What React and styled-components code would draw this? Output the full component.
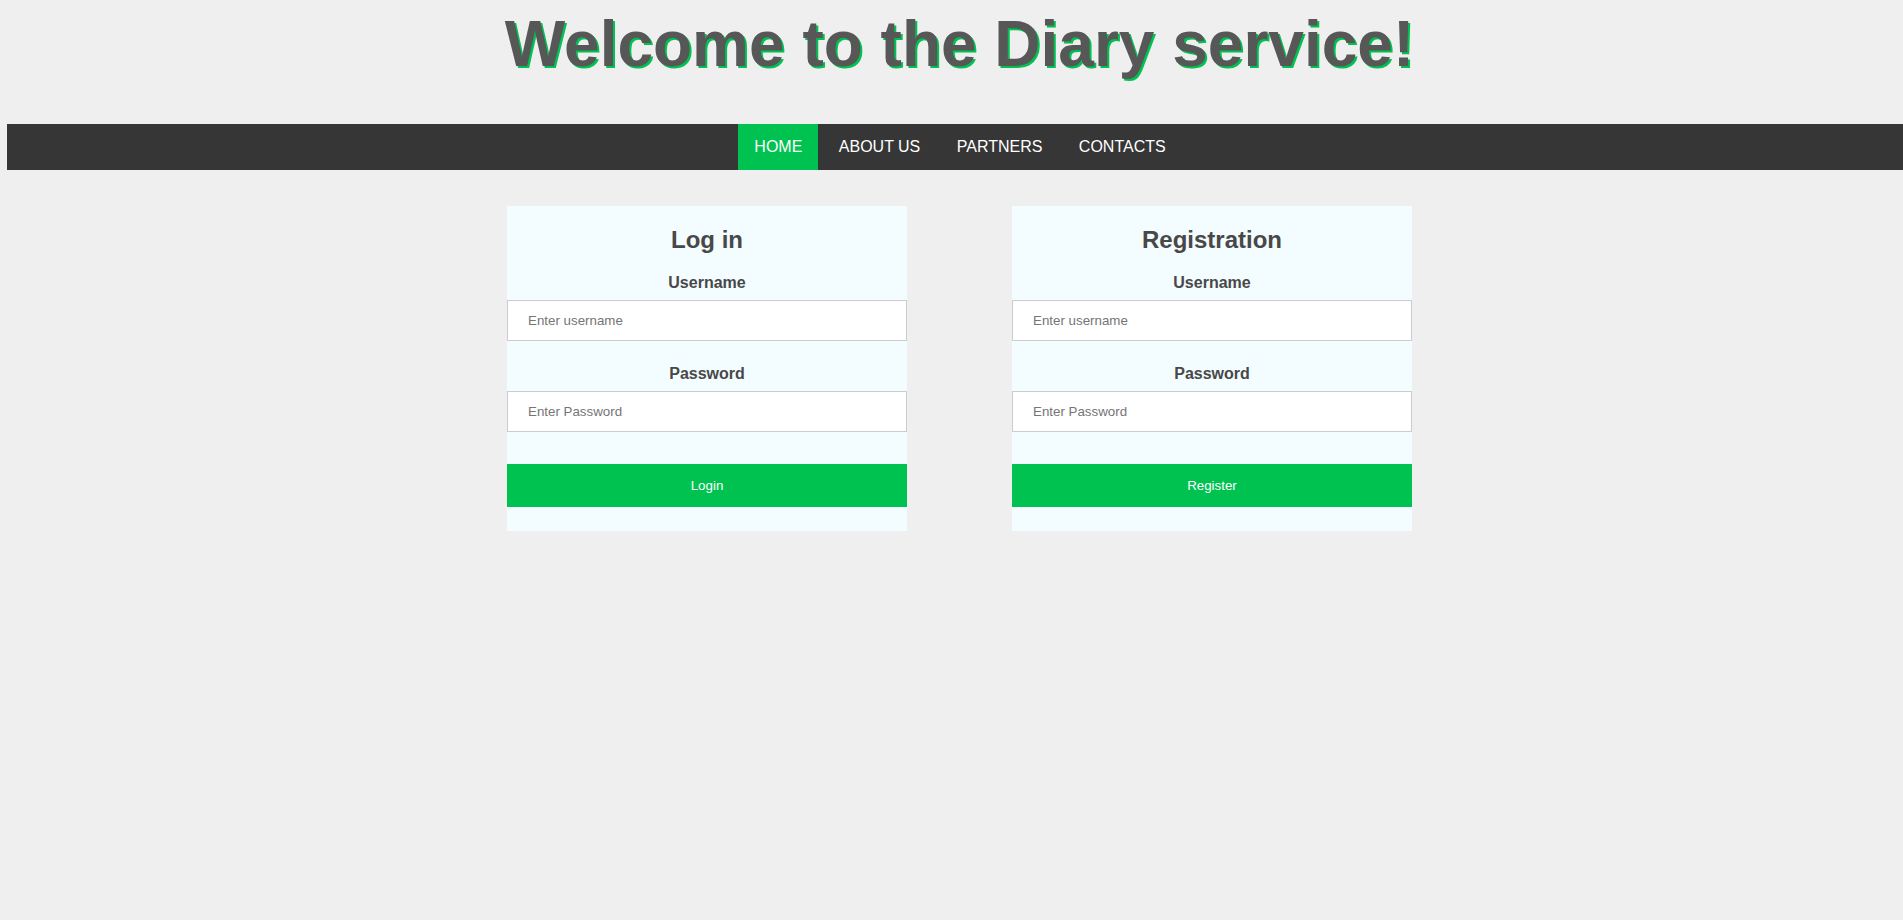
import React, { Fragment, useId } from "react";
import styled, { createGlobalStyle } from "styled-components";

const GlobalStyle = createGlobalStyle`
  *, *::before, *::after { box-sizing: border-box; }
  body {
    margin: 0;
    background: #efefef;
    color: #484848;
    font-family: "Liberation Sans", Arial, sans-serif;
    font-size: 16px;
    line-height: 18px;
  }
`;

const Page = styled.div`
  padding: 8px 0 24px 8px;
`;

const Header = styled.header`
  padding-left: 8px;
  margin-bottom: 44px;
`;

const Title = styled.h1`
  margin: 0;
  color: #575757;
  font-size: 64px;
  line-height: 72px;
  text-align: center;
  text-shadow: 2px 2px 0 #00c250;
`;

const NavBar = styled.nav`
  margin-left: -1px;
  padding-left: 10px;
  background: #363636;
`;

const NavList = styled.ul`
  margin: 0;
  padding: 0;
  list-style: none;
  text-align: center;
`;

const NavItem = styled.li`
  display: inline-block;
  vertical-align: top;
`;

const NavLink = styled.a`
  display: block;
  padding: 14px 16px;
  background: ${({ $active }) => ($active ? "#00c250" : "transparent")};
  color: #fff;
  text-decoration: none;
`;

const Main = styled.main`
  display: flex;
  flex-wrap: wrap;
  justify-content: center;
  gap: 36px 105px;
  padding: 36px 0 0 8px;
`;

const Card = styled.form`
  display: flex;
  flex-direction: column;
  width: 400px;
  max-width: 100%;
  padding: 20px 0 24px;
  background: #f3fcff;
  text-align: center;
`;

const CardTitle = styled.h2`
  margin: 0 0 20px;
  font-size: 24px;
  line-height: 28px;
`;

const Fields = styled.div`
  display: flex;
  flex-direction: column;
  gap: 24px;
  margin-bottom: 32px;
`;

const Field = styled.div`
  display: flex;
  flex-direction: column;
  gap: 8px;
`;

const Label = styled.label`
  font-weight: bold;
`;

const Input = styled.input`
  width: 100%;
  padding: 12px 20px;
  border: 1px solid #ccc;
  border-radius: 0;
  background: #fff;
`;

const SubmitButton = styled.button`
  width: 100%;
  padding: 14px 20px;
  border: 0;
  background: #00c250;
  color: #fff;
  cursor: pointer;
`;

const links = ["HOME", "ABOUT US", "PARTNERS", "CONTACTS"];

function AccountForm({ title, action }) {
  const id = useId();
  return (
    <Card onSubmit={(e) => e.preventDefault()}>
      <CardTitle>{title}</CardTitle>
      <Fields>
        <Field>
          <Label htmlFor={`${id}-name`}>Username</Label>
          <Input id={`${id}-name`} type="text" placeholder="Enter username" required />
        </Field>
        <Field>
          <Label htmlFor={`${id}-pass`}>Password</Label>
          <Input id={`${id}-pass`} type="password" placeholder="Enter Password" required />
        </Field>
      </Fields>
      <SubmitButton type="submit">{action}</SubmitButton>
    </Card>
  );
}

export default function App() {
  return (
    <>
      <GlobalStyle />
      <Page>
        <Header>
          <Title>Welcome to the Diary service!</Title>
        </Header>
        <NavBar>
          <NavList>
            {links.map((text, i) => (
              <Fragment key={text}>
                <NavItem>
                  <NavLink href="#" $active={i === 0}>{text}</NavLink>
                </NavItem>{" "}
              </Fragment>
            ))}
          </NavList>
        </NavBar>
        <Main>
          <AccountForm title="Log in" action="Login" />
          <AccountForm title="Registration" action="Register" />
        </Main>
      </Page>
    </>
  );
}
